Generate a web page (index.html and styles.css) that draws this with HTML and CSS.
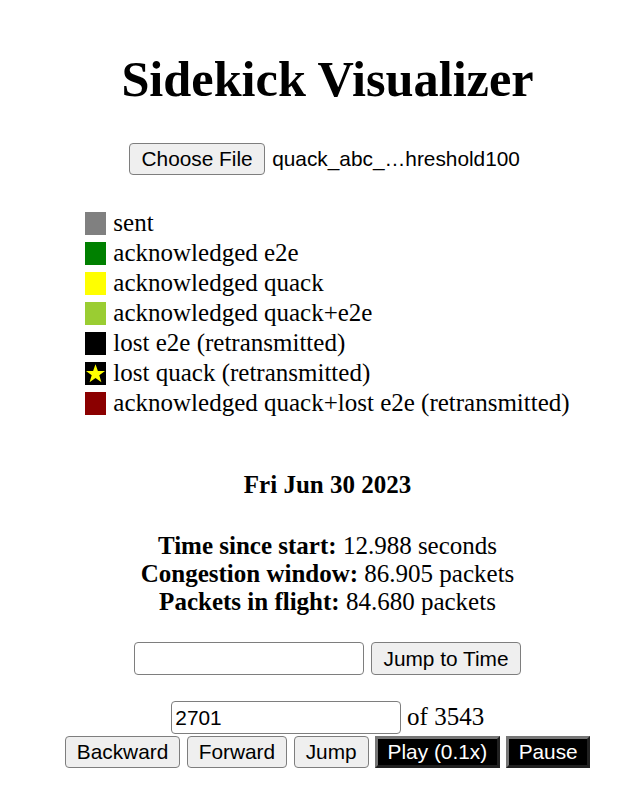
FILE: index.html
```html
<!DOCTYPE html>
<html>
<head>
<meta charset="utf-8">
<title>Sidekick Visualizer</title>
<link rel="stylesheet" href="styles.css">
</head>
<body>
<h1 class="title">Sidekick Visualizer</h1>

<div class="file-row">
  <div class="file-input">
    <button class="btn" type="button">Choose File</button>
    <span class="file-name">quack_abc_…hreshold100</span>
  </div>
</div>

<div class="legend-wrap">
  <ul class="legend">
    <li class="legend-item"><span class="swatch swatch-sent"></span><span>sent</span></li>
    <li class="legend-item"><span class="swatch swatch-e2e"></span><span>acknowledged e2e</span></li>
    <li class="legend-item"><span class="swatch swatch-quack"></span><span>acknowledged quack</span></li>
    <li class="legend-item"><span class="swatch swatch-both"></span><span>acknowledged quack+e2e</span></li>
    <li class="legend-item"><span class="swatch swatch-lost"></span><span>lost e2e (retransmitted)</span></li>
    <li class="legend-item"><span class="swatch swatch-lostquack"><svg viewBox="0 0 21 23" width="21" height="23"><polygon points="10.5,2.2 12.9,8.9 20,8.9 14.3,13.2 16.4,20.2 10.5,15.9 4.6,20.2 6.7,13.2 1,8.9 8.1,8.9" fill="#ffff00"/></svg></span><span>lost quack (retransmitted)</span></li>
    <li class="legend-item"><span class="swatch swatch-acklost"></span><span>acknowledged quack+lost e2e (retransmitted)</span></li>
  </ul>
</div>

<div class="date">Fri Jun 30 2023</div>

<div class="stats">
  <div><b>Time since start:</b> 12.988 seconds</div>
  <div><b>Congestion window:</b> 86.905 packets</div>
  <div><b>Packets in flight:</b> 84.680 packets</div>
</div>

<div class="row row-time">
  <input class="field" type="text" value="">
  <button class="btn" type="button">Jump to Time</button>
</div>

<div class="row row-index">
  <input class="field" type="text" value="2701">
  <span class="of">of 3543</span>
</div>

<div class="row row-controls">
  <button class="btn" type="button">Backward</button>
  <button class="btn" type="button">Forward</button>
  <button class="btn" type="button">Jump</button>
  <button class="btn btn-dark" type="button">Play (0.1x)</button>
  <button class="btn btn-dark" type="button">Pause</button>
</div>
</body>
</html>
```
FILE: styles.css
```css
html, body {
  background: #ffffff;
}

body {
  margin: 0 12.5px 0 25.5px;
  font-family: "Liberation Serif", "Times New Roman", serif;
  font-size: 25px;
  color: #000000;
}

.title {
  margin: 50px 0 0;
  text-align: center;
  font-size: 50.3px;
  font-weight: bold;
  line-height: normal;
}

.file-row {
  display: flex;
  justify-content: center;
  margin-top: 35px;
}

.file-input {
  width: 397px;
  display: flex;
  align-items: center;
  gap: 7px;
}

.file-name {
  font-family: "Liberation Sans", Arial, sans-serif;
  font-size: 20.83px;
  white-space: nowrap;
}

.btn {
  font-family: "Liberation Sans", Arial, sans-serif;
  font-size: 20.83px;
  line-height: normal;
  color: #000000;
  background: #efefef;
  border: 1.5px solid #7e7e7e;
  border-radius: 4px;
  padding: 2.5px 11.5px;
  margin: 0;
  height: 32px;
  box-sizing: border-box;
}

.btn-dark {
  background: #000000;
  color: #ffffff;
  border: 3px outset #767676;
  border-radius: 0;
  padding: 1px 9.5px;
}

.legend-wrap {
  text-align: center;
  margin-top: 33.2px;
}

.legend {
  display: inline-block;
  text-align: left;
  list-style: none;
  margin: 0;
  padding: 0;
}

.legend-item {
  display: flex;
  align-items: center;
  gap: 7px;
  height: 30px;
  white-space: nowrap;
}

.swatch {
  display: block;
  width: 21px;
  height: 23px;
  flex: none;
}

.swatch svg {
  display: block;
}

.swatch-sent { background: #808080; }
.swatch-e2e { background: #008000; }
.swatch-quack { background: #ffff00; }
.swatch-both { background: #9acd32; }
.swatch-lost { background: #000000; }
.swatch-lostquack { background: #000000; }
.swatch-acklost { background: #8b0000; }

.date {
  margin-top: 50px;
  text-align: center;
  font-weight: bold;
  font-size: 25px;
}

.stats {
  margin-top: 33.3px;
  text-align: center;
}

.row {
  display: flex;
  justify-content: center;
  gap: 7px;
}

.row-time {
  margin-top: 26.5px;
  align-items: center;
}

.row-index {
  margin-top: 26px;
  align-items: baseline;
  gap: 6.25px;
}

.row-controls {
  margin-top: 2px;
  gap: 6.5px;
}

.row-controls .btn {
  padding-left: 11px;
  padding-right: 11px;
}

.row-controls .btn-dark {
  padding-left: 9.5px;
  padding-right: 9.5px;
}

.field {
  width: 230px;
  height: 33px;
  box-sizing: border-box;
  font-family: "Liberation Sans", Arial, sans-serif;
  font-size: 20.83px;
  padding: 2px 3.5px;
  border: 1.5px solid #7e7e7e;
  border-radius: 4px;
  margin: 0;
  color: #000000;
  background: #ffffff;
}

.row-time .btn {
  height: 33px;
}
```
